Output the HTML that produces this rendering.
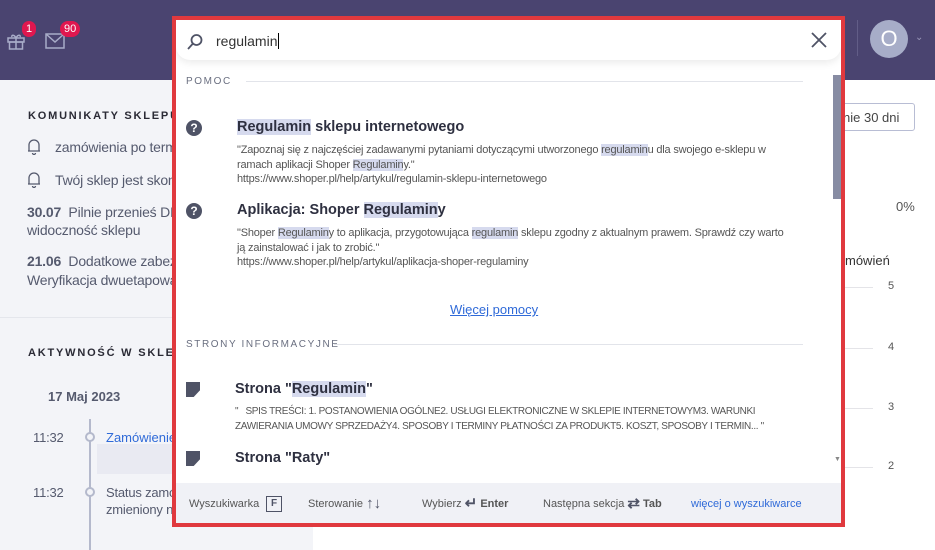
<!DOCTYPE html>
<html><head><meta charset="utf-8"><style>
*{box-sizing:border-box;margin:0;padding:0}
body{width:935px;height:550px;overflow:hidden;font-family:"Liberation Sans",sans-serif;background:#fff;position:relative;color:#333}
.hdr{position:absolute;left:0;top:0;width:935px;height:80px;background:#4a4470}
.left{position:absolute;left:0;top:80px;width:313px;height:470px;background:#f3f4f8}
.abs{position:absolute;white-space:nowrap}
.badge{position:absolute;background:#e0174f;color:#fff;font-size:11px;border-radius:9px;height:16px;line-height:16px;padding:0 4px;text-align:center}
.h{font-weight:bold;font-size:11px;letter-spacing:1.8px;color:#2a2a35}
.t{font-size:14px;color:#555a6e;letter-spacing:-0.2px}
.modal{position:absolute;left:172px;top:16px;width:673px;height:511px;border:4px solid #e0393e;background:#fff;overflow:hidden}
.sec{position:absolute;font-size:10px;letter-spacing:1.6px;color:#6a6f80}
.line{position:absolute;height:1px;background:#e2e4ea}
.ti{position:absolute;font-size:14.5px;font-weight:bold;color:#2e3040;white-space:nowrap}
.ds{position:absolute;font-size:11px;color:#555;line-height:14.5px;width:570px;letter-spacing:-0.2px}
mark{background:#d6daee;color:inherit}
.qi{position:absolute;width:16px;height:16px;border-radius:50%;background:#4f5366;color:#fff;font-size:12px;font-weight:bold;text-align:center;line-height:16px}
.pg{position:absolute;width:14px;height:15px;background:#4f5366;clip-path:polygon(0 0,100% 0,100% 55%,55% 100%,0 100%)}
.ft{position:absolute;left:0;top:463px;width:665px;height:40px;background:#f0f1f6;font-size:11px;color:#555}
.ft span{position:absolute;top:12px;height:18px;line-height:18px;white-space:nowrap}
.ft b.i{font-size:15px;color:#4f5366;vertical-align:top}
</style></head><body>
<div class="hdr"></div>
<svg class="abs" style="left:6px;top:31px" width="20" height="20" viewBox="0 0 20 20" fill="none" stroke="#a8acc8" stroke-width="1.5"><rect x="2" y="7" width="16" height="4"/><rect x="3.5" y="11" width="13" height="7"/><path d="M10 7v11M10 7C8 3 5 4 6 6M10 7c2-4 5-3 4-1"/></svg>
<div class="badge" style="left:22px;top:21px">1</div>
<svg class="abs" style="left:45px;top:33px" width="20" height="16" viewBox="0 0 20 16" fill="none" stroke="#a8acc8" stroke-width="1.5"><rect x="1" y="1" width="18" height="14"/><path d="M1 1l9 8 9-8"/></svg>
<div class="badge" style="left:60px;top:21px">90</div>
<div class="abs" style="left:857px;top:20px;width:1px;height:36px;background:#625d87"></div>
<div class="abs" style="left:870px;top:20px;width:38px;height:38px;border-radius:50%;background:#a7adc8;color:#fff;font-size:22px;text-align:center;line-height:38px">O</div>
<div class="abs" style="left:915px;top:32px;color:#9a96b8;font-size:10px">⌄</div>
<div class="left"></div>
<div class="abs h" style="left:28px;top:110px">KOMUNIKATY SKLEPU</div>
<svg class="abs" style="left:27px;top:139px" width="14" height="16" viewBox="0 0 14 16" fill="none" stroke="#555a6e" stroke-width="1.3"><path d="M2 12V6a5 5 0 0110 0v6zM1 12h12M5.5 14a1.5 1.5 0 003 0"/></svg>
<div class="abs t" style="left:55px;top:139px">zamówienia po term</div>
<svg class="abs" style="left:27px;top:172px" width="14" height="16" viewBox="0 0 14 16" fill="none" stroke="#555a6e" stroke-width="1.3"><path d="M2 12V6a5 5 0 0110 0v6zM1 12h12M5.5 14a1.5 1.5 0 003 0"/></svg>
<div class="abs t" style="left:55px;top:172px">Twój sklep jest skon</div>
<div class="abs t" style="left:27px;top:204px"><b>30.07</b>&nbsp;&nbsp;Pilnie przenieś DN</div>
<div class="abs t" style="left:27px;top:222px">widoczność sklepu</div>
<div class="abs t" style="left:27px;top:253px"><b>21.06</b>&nbsp;&nbsp;Dodatkowe zabez</div>
<div class="abs t" style="left:27px;top:272px">Weryfikacja dwuetapowa</div>
<div class="abs" style="left:0;top:317px;width:313px;height:1px;background:#e4e6ec"></div>
<div class="abs h" style="left:28px;top:347px">AKTYWNOŚĆ W SKLEPIE</div>
<div class="abs" style="left:48px;top:389px;font-size:13px;font-weight:bold;color:#555a6e">17 Maj 2023</div>
<div class="abs" style="left:89px;top:419px;width:2px;height:131px;background:#b4b9cc"></div>
<div class="abs t" style="left:33px;top:430px;font-size:13px">11:32</div>
<div class="abs" style="left:85px;top:432px;width:10px;height:10px;border-radius:50%;border:2px solid #b4b9cc;background:#f3f4f8"></div>
<div class="abs" style="left:106px;top:430px;font-size:13px;color:#2f6ad8">Zamówienie</div>
<div class="abs" style="left:97px;top:444px;width:75px;height:30px;background:#e9eaf2"></div>
<div class="abs t" style="left:33px;top:485px;font-size:13px">11:32</div>
<div class="abs" style="left:85px;top:487px;width:10px;height:10px;border-radius:50%;border:2px solid #b4b9cc;background:#f3f4f8"></div>
<div class="abs t" style="left:106px;top:485px;font-size:13px">Status zamó</div>
<div class="abs t" style="left:106px;top:502px;font-size:13px">zmieniony n</div>
<div class="abs" style="left:820px;top:103px;width:95px;height:28px;border:1px solid #b8bdd4;border-radius:3px;background:#fff;font-size:13px;color:#444;padding:6px 0 0 22px">nie 30 dni</div>
<div class="abs" style="left:896px;top:199px;font-size:13px;color:#555">0%</div>
<div class="abs" style="left:845px;top:253px;font-size:13px;color:#333">mówień</div>
<div class="abs" style="left:845px;top:287px;width:28px;height:1px;background:#e4e4e8"></div><div class="abs" style="left:888px;top:280px;font-size:11px;color:#555">5</div>
<div class="abs" style="left:845px;top:348px;width:28px;height:1px;background:#e4e4e8"></div><div class="abs" style="left:888px;top:341px;font-size:11px;color:#555">4</div>
<div class="abs" style="left:845px;top:408px;width:28px;height:1px;background:#e4e4e8"></div><div class="abs" style="left:888px;top:401px;font-size:11px;color:#555">3</div>
<div class="abs" style="left:845px;top:467px;width:28px;height:1px;background:#e4e4e8"></div><div class="abs" style="left:888px;top:460px;font-size:11px;color:#555">2</div>

<div class="modal">
 <div class="abs" style="left:0;top:0;width:665px;height:40px;border-radius:0 0 14px 14px;box-shadow:0 3px 8px rgba(0,0,0,.08);background:#fff"></div>
 <svg class="abs" style="left:10px;top:13px" width="18" height="18" viewBox="0 0 18 18" fill="none" stroke="#4f5366" stroke-width="1.8"><circle cx="10.5" cy="7" r="5"/><path d="M7 10.5L2 16"/></svg>
 <div class="abs" style="left:40px;top:13px;font-size:14px;color:#333">regulamin<span style="border-left:1px solid #000;margin-left:1px"></span></div>
 <svg class="abs" style="left:635px;top:12px" width="16" height="16" viewBox="0 0 16 16" stroke="#4f5366" stroke-width="1.8"><path d="M1 1l14 14M15 1L1 15"/></svg>
 <div class="sec" style="left:10px;top:56px">POMOC</div>
 <div class="line" style="left:70px;top:61px;width:557px"></div>
 <div class="qi" style="left:10px;top:100px">?</div>
 <div class="ti" style="left:61px;top:99px"><mark>Regulamin</mark> sklepu internetowego</div>
 <div class="ds" style="left:61px;top:123px;width:560px">"Zapoznaj się z najczęściej zadawanymi pytaniami dotyczącymi utworzonego <mark>regulamin</mark>u dla swojego e-sklepu w ramach aplikacji Shoper <mark>Regulamin</mark>y."<br>https://www.shoper.pl/help/artykul/regulamin-sklepu-internetowego</div>
 <div class="qi" style="left:10px;top:183px">?</div>
 <div class="ti" style="left:61px;top:182px">Aplikacja: Shoper <mark>Regulamin</mark>y</div>
 <div class="ds" style="left:61px;top:206px;width:550px">"Shoper <mark>Regulamin</mark>y to aplikacja, przygotowująca <mark>regulamin</mark> sklepu zgodny z aktualnym prawem. Sprawdź czy warto ją zainstalować i jak to zrobić."<br>https://www.shoper.pl/help/artykul/aplikacja-shoper-regulaminy</div>
 <div class="abs" style="left:274px;top:282px;font-size:13px;color:#2f6ad8;text-decoration:underline">Więcej pomocy</div>
 <div class="sec" style="left:10px;top:319px">STRONY INFORMACYJNE</div>
 <div class="line" style="left:158px;top:324px;width:469px"></div>
 <div class="pg" style="left:10px;top:362px"></div>
 <div class="ti" style="left:59px;top:361px">Strona "<mark>Regulamin</mark>"</div>
 <div class="ds" style="left:59px;top:385px;width:580px;font-size:10px;letter-spacing:-0.35px">"&nbsp;&nbsp; SPIS TREŚCI: 1. POSTANOWIENIA OGÓLNE2. USŁUGI ELEKTRONICZNE W SKLEPIE INTERNETOWYM3. WARUNKI ZAWIERANIA UMOWY SPRZEDAŻY4. SPOSOBY I TERMINY PŁATNOŚCI ZA PRODUKT5. KOSZT, SPOSOBY I TERMIN... "</div>
 <div class="pg" style="left:10px;top:431px"></div>
 <div class="ti" style="left:59px;top:430px">Strona "Raty"</div>
 <div class="abs" style="left:657px;top:55px;width:8px;height:124px;background:#878ca3"></div>
 <div class="abs" style="left:658px;top:436px;font-size:7px;color:#888">▼</div>
 <div class="ft">
  <span style="left:13px">Wyszukiwarka</span>
  <span style="left:90px;top:13px;width:16px;height:16px;border:1.5px solid #4f5366;font-weight:bold;font-size:10px;text-align:center;line-height:13px;color:#4f5366">F</span>
  <span style="left:132px">Sterowanie <b class="i">↑↓</b></span>
  <span style="left:246px">Wybierz <b class="i">↵</b> <b>Enter</b></span>
  <span style="left:367px">Następna sekcja <b class="i">⇄</b> <b>Tab</b></span>
  <span style="left:515px;color:#2f6ad8">więcej o wyszukiwarce</span>
 </div>
</div>
</body></html>
